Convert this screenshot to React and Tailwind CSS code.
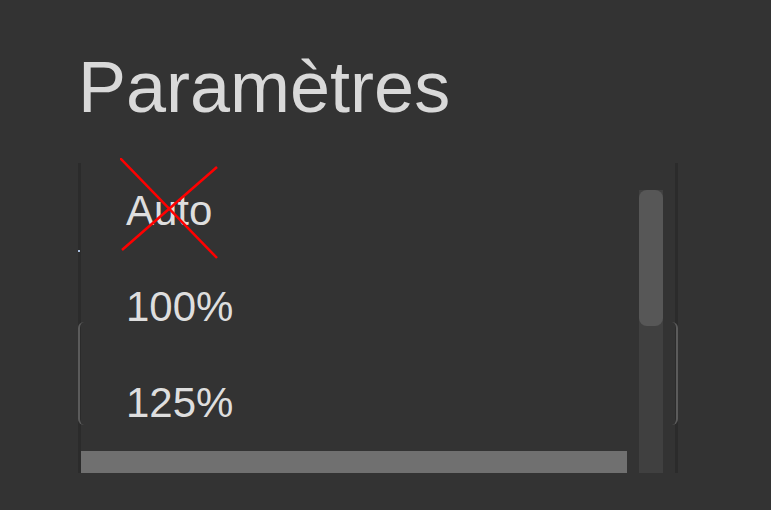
import React from 'react';

const options = ['Auto', '100%', '125%', '150%'];

function ScaleListbox() {
    return (
        <div className="absolute left-0 top-[40px] z-20 flex h-[310px] w-[600px] overflow-hidden border-x-[3px] border-[#2b2b2b] bg-[#333333]">
            <ul className="w-[546px] shrink-0">
                {options.map((opt, i) => (
                    <li
                        key={opt}
                        className={
                            i === 3
                                ? 'flex h-[96px] items-center bg-[#707070] pb-[2px] pl-[45px] text-[42px] text-[#dedede]'
                                : 'flex h-[96px] items-center pb-[2px] pl-[45px] text-[42px] text-[#dedede]'
                        }
                    >
                        {opt}
                    </li>
                ))}
            </ul>
            {/* scrollbar */}
            <div className="ml-[12px] mt-[27px] w-[24px] shrink-0 bg-[#404040]">
                <div className="h-[136px] rounded-[8px] bg-[#575757]" />
            </div>
        </div>
    );
}

export default function App() {
    return (
        <div className="min-h-screen bg-[#333333] pl-[78px] pt-[51px] font-['Liberation_Sans',Arial,sans-serif]">
            <h1 className="text-[72px] leading-none text-[#d9d9d9]">Paramètres</h1>

            <div className="relative w-[600px]">
                {/* select box under the open list */}
                <div className="h-[199px]" />
                <div className="relative z-30 h-[103px] w-[600px] rounded-[6px] border-x-[2px] border-[#5b5b5b]" />

                <ScaleListbox />

                {/* caret dot */}
                <div className="absolute left-0 top-[127px] z-30 h-[2px] w-[2px] bg-[#a9bfe0]" />

                {/* red cross over "Auto" */}
                <svg
                    className="absolute left-[42px] top-[35px] z-40"
                    width="100"
                    height="102"
                    viewBox="0 0 100 102"
                >
                    <line x1="0" y1="0" x2="97" y2="100" stroke="#ff0000" strokeWidth="2.5" />
                    <line x1="2" y1="92" x2="97" y2="9" stroke="#ff0000" strokeWidth="2.5" />
                </svg>
            </div>
        </div>
    );
}
